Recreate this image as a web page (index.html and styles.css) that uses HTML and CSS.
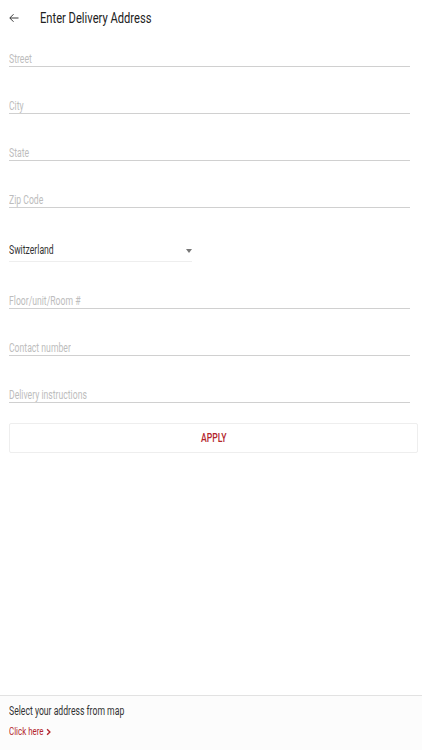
FILE: index.html
```html
<!DOCTYPE html>
<html lang="en">
  <head>
    <meta charset="UTF-8" />
    <meta name="viewport" content="width=device-width, initial-scale=1.0" />
    <title>Enter Delivery Address</title>
    <link rel="stylesheet" href="styles.css">
  </head>
  <body>
    <div class="page">
      <header class="top">
        <svg class="back" viewBox="0 0 24 24" width="12" height="12">
          <path d="M21 12H4M11 4.5L3.5 12 11 19.5" fill="none" stroke="#222" stroke-width="1.8" />
        </svg>
        <h1 class="title"><span class="narrow">Enter Delivery Address</span></h1>
      </header>
      <div class="form">
        <div class="field"><span class="narrow">Street</span></div>
        <div class="field"><span class="narrow">City</span></div>
        <div class="field"><span class="narrow">State</span></div>
        <div class="field"><span class="narrow">Zip Code</span></div>
        <div class="field select">
          <span class="narrow">Switzerland</span>
          <span class="caret"></span>
        </div>
        <div class="field"><span class="narrow">Floor/unit/Room #</span></div>
        <div class="field"><span class="narrow">Contact number</span></div>
        <div class="field"><span class="narrow">Delivery instructions</span></div>
      </div>
      <div class="apply"><span class="narrow mid">APPLY</span></div>
      <footer class="map">
        <p class="map-text"><span class="narrow">Select your address from map</span></p>
        <p class="map-link">
          <span class="narrow">Click here</span>
          <svg viewBox="0 0 10 10" width="7" height="8">
            <path d="M3 1l4 4-4 4" fill="none" stroke="#b3262c" stroke-width="2" />
          </svg>
        </p>
      </footer>
    </div>
  </body>
</html>
```

FILE: styles.css
```css
* {
  margin: 0;
  padding: 0;
  box-sizing: border-box;
}
body {
  font-family: Roboto, "Liberation Sans", sans-serif;
  background: #fff;
  color: #333;
}
.page {
  display: flex;
  flex-direction: column;
  min-height: 750px;
}
.narrow {
  display: inline-block;
  transform: scaleX(0.72);
  transform-origin: left center;
  white-space: nowrap;
}
.narrow.mid {
  transform-origin: center;
}
.top {
  height: 36px;
  display: flex;
  align-items: center;
  padding-left: 8px;
}
.back {
  display: block;
}
.title {
  font-size: 15.5px;
  font-weight: 400;
  color: #222;
  margin-left: 20px;
  line-height: 20px;
}
.form {
  display: flex;
  flex-direction: column;
  gap: 32px;
  padding: 16px 12px 0 9px;
}
.field {
  font-size: 12px;
  line-height: 14px;
  color: #bdbdbd;
  border-bottom: 1px solid #d0d0d0;
}
.field.select {
  width: 183px;
  color: #333;
  padding: 3px 0 4px;
  border-bottom-color: #eee;
  display: flex;
  justify-content: space-between;
  align-items: center;
}
.caret {
  width: 0;
  height: 0;
  border-left: 3px solid transparent;
  border-right: 3px solid transparent;
  border-top: 4px solid #777;
  margin: 1px 0 0;
}
.apply {
  margin: 20px 4px 0 9px;
  height: 30px;
  border: 1px solid #eee;
  border-radius: 2px;
  display: flex;
  align-items: center;
  justify-content: center;
  font-size: 12px;
  font-weight: 500;
  color: #b3262c;
}
.map {
  margin-top: auto;
  height: 55px;
  border-top: 1px solid #e2e2e2;
  background: #fcfcfc;
  padding: 8px 9px 0;
}
.map-text {
  font-size: 12px;
  line-height: 14px;
  color: #333;
}
.map-link {
  margin-top: 7px;
  font-size: 11px;
  line-height: 14px;
  color: #b3262c;
  display: flex;
  align-items: center;
}
.map-link svg {
  margin-left: -12px;
}
```
